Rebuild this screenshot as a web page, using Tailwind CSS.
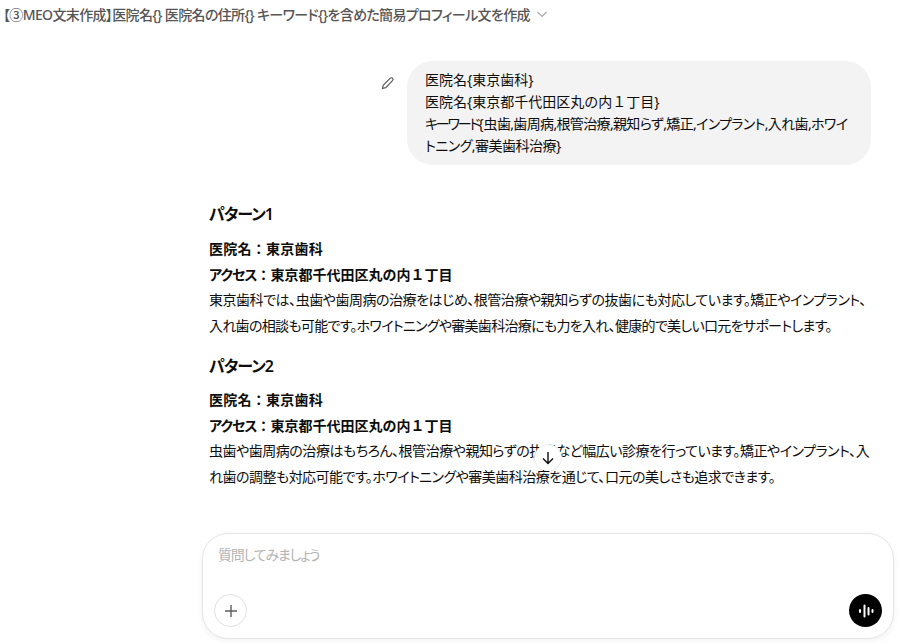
<!DOCTYPE html>
<html lang="ja">

<head>
    <meta charset="UTF-8">
    <script src="https://cdn.jsdelivr.net/npm/@tailwindcss/browser@4"></script>
    <title>MEO文末作成</title>
</head>

<body class="bg-white">
    <div class="relative w-[898px] h-[643px] overflow-hidden bg-white text-[#0d0d0d] font-['Noto_Sans','Noto_Sans_CJK_JP',sans-serif] text-[14px] [font-feature-settings:'palt']">
        <!-- title bar -->
        <div class="flex items-center gap-[6px] pl-[3px] h-[28px] text-[14px] font-medium text-[#555555] whitespace-nowrap">
            <span class="tracking-[-0.64px]">【③MEO文末作成】医院名{} 医院名の住所{} キーワード{}を含めた簡易プロフィール文を作成</span>
            <svg width="12" height="12" viewBox="0 0 12 12" fill="none" stroke="#a8a8a8" stroke-width="1.2">
                <path d="M1.5 4l4.5 4.5L10.500 4" />
            </svg>
        </div>

        <!-- user message -->
        <div class="flex justify-end items-start gap-[11px] pt-[33px] pr-[27px]">
            <svg class="mt-[14px]" width="16" height="16" viewBox="0 0 16 16" fill="none" stroke="#5d5d5d" stroke-width="1.2">
                <path d="M2.500 13.500l.7-3.200 6.800-7a1.700 1.700 0 0 1 2.500 2.400l-6.800 7z" />
            </svg>
            <div class="w-[464px] h-[104px] rounded-[26px] bg-[#f3f3f3] pl-[18px] pt-[8px] leading-[22px] whitespace-nowrap">
                <div class="[font-feature-settings:normal]">医院名{東京歯科}</div>
                <div class="[font-feature-settings:normal]">医院名{東京都千代田区丸の内１丁目}</div>
                <div><span class="tracking-[-2.200px]">キーワード</span>{<span class="tracking-[-0.65px]">虫歯,歯周病,根管治療,親知らず,矯正,インプラント,入れ歯,ホワイ</span></div>
                <div class="tracking-[-0.5px]">トニング,審美歯科治療}</div>
            </div>
        </div>

        <!-- answer -->
        <div class="pl-[209px] pt-[36px] whitespace-nowrap leading-[25.500px]">
            <h3 class="text-[16px] font-semibold leading-[27px] mb-[8px] tracking-[-1px]">パターン1</h3>
            <p class="font-semibold [font-feature-settings:normal] tracking-[0.25px]">医院名：東京歯科</p>
            <p class="font-semibold [font-feature-settings:normal]"><span class="[font-feature-settings:'palt'] tracking-[-1px]">アクセス</span>：東京都千代田区丸の内１丁目</p>
            <p><span class="tracking-[-0.47px]">東京歯科では、虫歯や歯周病の治療をはじめ、根管治療や親知らずの抜歯にも対応しています。矯正やインプラント、</span><br><span class="tracking-[-0.7px]">入れ歯の相談も可能です。ホワイトニングや審美歯科治療にも力を入れ、健康的で美しい口元をサポートします。</span></p>
            <h3 class="text-[16px] font-semibold leading-[27px] mt-[15px] mb-[7px] tracking-[-1px]">パターン2</h3>
            <p class="font-semibold [font-feature-settings:normal] tracking-[0.25px]">医院名：東京歯科</p>
            <p class="font-semibold [font-feature-settings:normal]"><span class="[font-feature-settings:'palt'] tracking-[-1px]">アクセス</span>：東京都千代田区丸の内１丁目</p>
            <p><span class="tracking-[-0.47px]">虫歯や歯周病の治療はもちろん、根管治療や親知らずの抜歯など幅広い診療を行っています。矯正やインプラント、入</span><br><span class="relative z-10 tracking-[-0.52px]">れ歯の調整も対応可能です。ホワイトニングや審美歯科治療を通じて、口元の美しさも追求できます。</span></p>
        </div>

        <!-- scroll down button -->
        <div class="absolute left-[534px] top-[444px] w-[28px] h-[28px] rounded-full bg-white border border-[#ececec] flex items-center justify-center">
            <svg width="16" height="16" viewBox="0 0 16 16" fill="none" stroke="#0d0d0d" stroke-width="1.400">
                <path d="M8 2v11.500M3 8.500l5 5 5-5" />
            </svg>
        </div>

        <!-- composer -->
        <div class="absolute left-[202px] top-[533px] w-[692px] h-[106px] rounded-[26px] bg-white border border-[#e5e5e5] shadow-[0_2px_6px_rgba(0,0,0,0.06)] flex flex-col justify-between pl-[11px] pr-[11px] pb-[11px] pt-[10px]">
            <div class="pl-[4px] text-[#b4b4b4] leading-[22px] tracking-[-1.200px]">質問してみましょう</div>
            <div class="flex items-center justify-between">
                <div class="w-[33px] h-[33px] rounded-full border border-[#e0e0e0] flex items-center justify-center">
                    <svg width="16" height="16" viewBox="0 0 16 16" fill="none" stroke="#5d5d5d" stroke-width="1.400">
                        <path d="M8 2v12M2 8h12" />
                    </svg>
                </div>
                <div class="w-[33px] h-[33px] rounded-full bg-black flex items-center justify-center">
                    <svg width="20" height="20" viewBox="0 0 20 20" fill="none" stroke="#fff" stroke-width="2" stroke-linecap="round">
                        <path d="M4 9v2M8.500 4.500v11M12.500 7v6.500M16.500 9v2" />
                    </svg>
                </div>
            </div>
        </div>
    </div>
</body>

</html>
